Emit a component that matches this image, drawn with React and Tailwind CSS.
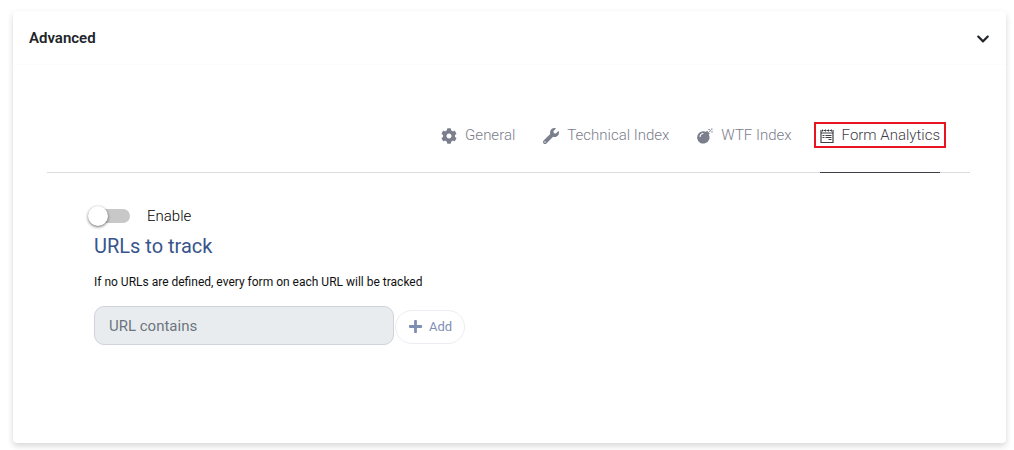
import React, { useState } from 'react';
import { FaChevronDown, FaCog, FaPlus, FaWrench } from 'react-icons/fa';

const BombIcon = () => (
  <svg viewBox="0 0 16 16" className="h-4 w-4" fill="currentColor" aria-hidden="true">
    <path fillRule="evenodd" d="M6.6 3.2c.8 0 1.6.2 2.4.5l1.1-1 2.7 2.7-1 1.1a6.2 6.2 0 1 1-5.2-3.3zM2.5 9h1.1c0-1.8 1.1-2.8 2.8-2.9V5.1c-2.4.1-3.9 1.6-3.9 3.9z" />
    <path d="M12 3.4 13.4 2l.7.7-1.4 1.4zM11.2.9h2l-.2.8h-1.8zM14.2.6h1.2v1.2h-1.2zM14.6 2.8h.8v2h-.8z" />
  </svg>
);

const FormIcon = () => (
  <svg viewBox="0 0 14 14" className="h-3.5 w-3.5" fill="none" stroke="currentColor" aria-hidden="true">
    <path d="M1.5 1.5H1v12h12v-12h-.5M3.5 1.5h1.5M6.5 1.5H8M9.5 1.5h1.5" strokeWidth="1.2" />
    <path d="M2.5.5v2M5.5.5v2M8.5.5v2M11.5.5v2" strokeWidth="1" />
    <path d="M1 4h12" strokeWidth="1" />
    <path d="M2.5 6.5h2M5.5 6.5h6M2.5 8.5h2M5.5 8.5h6M8.5 10.5h3" strokeWidth="1.2" />
  </svg>
);

const tabs = [
  { id: 'general', label: 'General', icon: <FaCog size={16} /> },
  { id: 'technical', label: 'Technical Index', icon: <FaWrench size={16} /> },
  { id: 'wtf', label: 'WTF Index', icon: <BombIcon /> },
  { id: 'forms', label: 'Form Analytics', icon: <FormIcon /> },
];

const FormAnalytics = () => {
  const [enabled, setEnabled] = useState(false);
  const [url, setUrl] = useState('');

  return (
    <div className="px-10 pt-[31px]">
      <label className="flex items-center gap-4 text-[15px] leading-6 font-light text-black">
        <span className="relative flex h-6 w-11 items-center">
          <input
            type="checkbox"
            checked={enabled}
            onChange={(e) => setEnabled(e.target.checked)}
            className="peer ml-1 h-3.5 w-[39px] appearance-none rounded-full bg-[#c8c8c8] checked:bg-[#8fa3cc]"
          />
          <span className="absolute left-px h-5 w-5 rounded-full bg-white shadow-[0_1px_3px_rgba(0,0,0,0.6)] transition-transform peer-checked:translate-x-6" />
        </span>
        Enable
      </label>

      <div className="pl-[7px]">
        <h2 className="mt-1 text-xl leading-7 font-normal text-[#38558b]">URLs to track</h2>
        <p className="mt-3 text-xs leading-5 text-[#111]">
          If no URLs are defined, every form on each URL will be tracked
        </p>
        <form className="mt-3.5 flex items-center" onSubmit={(e) => e.preventDefault()}>
          <input
            type="text"
            aria-label="URL contains"
            placeholder="URL contains"
            disabled={!enabled}
            value={url}
            onChange={(e) => setUrl(e.target.value)}
            className="h-[39px] w-75 rounded-[10px] border border-[#ced4da] px-3.5 text-[15px] text-[#495057] placeholder:text-[#6c757d] disabled:bg-[#e9ecef]"
          />
          <button
            type="submit"
            disabled={!enabled}
            className="mt-0.5 ml-px flex h-8.5 items-center gap-1.5 rounded-full border border-[#ebedf2] bg-white px-3 text-[13px] text-[#7f8fb3]"
          >
            <FaPlus size={15} />
            Add
          </button>
        </form>
      </div>
    </div>
  );
};

const App = () => {
  const [open, setOpen] = useState(true);
  const [active, setActive] = useState('forms');

  return (
    <main className="pt-[11px] pr-2 pb-4 pl-[13px] font-[Roboto,sans-serif]">
      <section className="rounded-sm bg-white shadow-[0_3px_6px_rgba(0,0,0,0.16)]">
        <h1>
          <button
            type="button"
            aria-expanded={open}
            onClick={() => setOpen(!open)}
            className="flex h-[54px] w-full items-center justify-between border-b border-[#fcfcfc] px-4 pt-0.5 text-[15px] font-semibold text-[#212529]"
          >
            Advanced
            <FaChevronDown size={14} />
          </button>
        </h1>

        {open && (
          <div className="pt-[51px] pr-9 pb-[98px] pl-[34px]">
            <div role="tablist" className="flex flex-wrap justify-end gap-x-7 border-b border-[#dcdcdc] pr-[30px]">
              {tabs.map((tab) => (
                <button
                  key={tab.id}
                  type="button"
                  role="tab"
                  aria-selected={active === tab.id}
                  onClick={() => setActive(tab.id)}
                  className={`-mb-px border-b pt-2.5 pb-7 text-[15px] leading-[18px] font-light ${
                    active === tab.id ? 'border-[#3f4047] text-[#3f4047]' : 'border-transparent text-[#7b7e8c]'
                  }`}
                >
                  <span
                    className={`flex items-center gap-2 ${
                      tab.id === 'forms' ? '-mx-0.5 px-0.5 outline-2 outline-offset-2 outline-[#e9141d]' : ''
                    }`}
                  >
                    <span className="pt-0.5">{tab.icon}</span>
                    {tab.label}
                  </span>
                </button>
              ))}
            </div>
            <FormAnalytics />
          </div>
        )}
      </section>
    </main>
  );
};

export default App;
